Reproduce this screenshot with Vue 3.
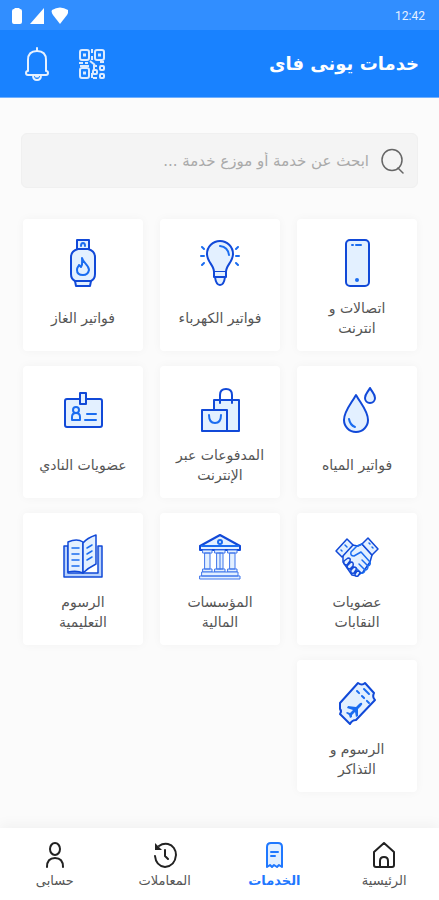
<script setup>
import { ref } from 'vue'

const search = ref('')

const services = [
  { icon: 'phone', label: 'اتصالات و انترنت' },
  { icon: 'bulb', label: 'فواتير الكهرباء' },
  { icon: 'gas', label: 'فواتير الغاز' },
  { icon: 'water', label: 'فواتير المياه' },
  { icon: 'bags', label: 'المدفوعات عبر الإنترنت' },
  { icon: 'club', label: 'عضويات النادي' },
  { icon: 'hands', label: 'عضويات النقابات' },
  { icon: 'bank', label: 'المؤسسات المالية' },
  { icon: 'book', label: 'الرسوم التعليمية' },
  { icon: 'ticket', label: 'الرسوم و التذاكر' }
]

const tabs = [
  { icon: 'home', label: 'الرئيسية' },
  { icon: 'receipt', label: 'الخدمات' },
  { icon: 'history', label: 'المعاملات' },
  { icon: 'user', label: 'حسابى' }
]
const active = ref('receipt')
</script>

<template>
  <div class="page" dir="rtl" lang="ar">
    <div class="status">
      <span class="time">12:42</span>
      <svg class="statusIcons" width="56" height="18" viewBox="0 0 56 18" fill="#fff" aria-hidden="true">
        <path d="M3 1h4l1 1q2 0 2 2v11q0 2-2 2H2q-2 0-2-2V4q0-2 2-2z" />
        <path d="M32 1v16H18z" />
        <path d="M40 3q8-5 16 0 1 2-1 5l-7 9-7-9q-2-3-1-5z" />
      </svg>
    </div>

    <header class="header">
      <h1 class="title">خدمات يونى فاى</h1>
      <div class="actions">
        <button type="button" class="iconButton" aria-label="رمز الاستجابة">
          <svg width="28" height="32" viewBox="0 0 28 32" fill="none" stroke="#dcebff" stroke-width="2">
            <rect x="2" y="2" width="9" height="10" rx="2" />
            <rect x="17" y="2" width="9" height="10" rx="2" />
            <rect x="2" y="20" width="9" height="10" rx="2" />
            <path d="M5 7h3M20 7h3M5 25h3" stroke-width="3" />
            <path d="M14 1v4M14 8v4M1 15h4M7 15h3M12 13l5 4M2 18h9M22 14h4M19 18h-3v4M14 25v5" />
            <rect x="22" y="18" width="4" height="4" rx="1" />
            <rect x="15" y="22" width="4" height="4" rx="1" />
            <rect x="22" y="26" width="4" height="4" rx="1" />
            <path d="M15 30h4" />
          </svg>
        </button>
        <button type="button" class="iconButton" aria-label="الإشعارات">
          <svg width="26" height="34" viewBox="0 0 26 34" fill="none" stroke="#e6f1ff" stroke-width="2" stroke-linecap="round" stroke-linejoin="round">
            <path d="M13 1v3M4 24V13q0-9 9-9t9 9v11M4 24q-2 0-2 2t2 2h18q2 0 2-2t-2-2" />
            <path d="M9 28q0 5 4 5t4-5M12 29.500h2" />
          </svg>
        </button>
      </div>
    </header>

    <main class="content">
      <label class="search">
        <svg width="24" height="26" viewBox="0 0 24 26" fill="none" stroke="#666" stroke-width="1.500" stroke-linecap="round" aria-hidden="true">
          <ellipse cx="11" cy="12" rx="10" ry="10.500" />
          <path d="M17 20l5 5" />
        </svg>
        <input v-model="search" type="text" class="searchInput" aria-label="بحث" placeholder="ابحث عن خدمة أو موزع خدمة ...">
      </label>

      <div class="grid">
        <button v-for="service in services" :key="service.icon" type="button" class="card">
          <svg class="cardIcon" viewBox="0 0 48 48" aria-hidden="true">
            <g v-if="service.icon == 'phone'">
              <rect x="13" y="1" width="23" height="46" rx="4" />
              <path class="line" d="M19 6h1M23 6h5" />
              <circle class="solid" cx="24" cy="41" r="2" />
            </g>
            <g v-else-if="service.icon == 'bulb'">
              <path d="M18 33c0-7-7-10-7-18a13 13 0 0 1 26 0c0 8-7 11-7 18z" />
              <path d="M18 33v5h12v-5M19 38q1 8 5 8t5-8z" />
              <path class="line" d="M24 7q8 1 9 9M5 17h3M40 17h3M6 8l2 2M42 8l-2 2M6 26l2-2M42 26l-2-2" />
            </g>
            <g v-else-if="service.icon == 'gas'">
              <path d="M18 10V1h12v9" />
              <path class="line" d="M22 7q0-3 2-3t2 3" />
              <path d="M19 10h10q7 2 7 8v17q0 5-4 7H16q-4-2-4-7V18q0-6 7-8z" />
              <path d="M16 42h16l-1 5H17z" />
              <path class="line" d="M23 19c1 5 7 7 7 12q-1 5-6 5-6 0-6-5c0-3 2-4 2-5l2 2c2-3 1-6 1-9z" />
            </g>
            <g v-else-if="service.icon == 'water'">
              <path d="M23 9c5 9 12 16 12 25a12 12 0 0 1-24 0c0-9 7-16 12-25z" />
              <path d="M37 2c2 4 5 6 5 10a5 5 0 0 1-10 0c0-4 3-6 5-10z" />
              <path class="line" d="M16 33q1 6 6 8" />
            </g>
            <g v-else-if="service.icon == 'bags'">
              <path d="M18 14h25v31H18z" />
              <path class="bare" d="M24 17V9q0-6 6-6t6 6v8" />
              <path d="M6 24h25v21H6z" />
              <path class="line" d="M13 29q0 8 6 8t6-8" />
            </g>
            <g v-else-if="service.icon == 'club'">
              <rect x="6" y="13" width="37" height="28" rx="2" />
              <path d="M21 7h6v11h-6z" />
              <circle class="line" cx="17" cy="24" r="3" />
              <path class="line" d="M13 34v-3q0-4 4-4t4 4v3zM28 28h9M26 34h11" />
            </g>
            <g v-else-if="service.icon == 'hands'" class="medium">
              <path d="M10 22l9-10 6 1 4-2 10 11-2 7-7 10-6 4-5-1-9-13z" />
              <path d="M3 18L14 6l6 6L9 24z" />
              <path d="M35 5l10 11-6 6-10-11z" />
              <path class="line" d="M29 11l-5 2-6 6q-1 4 3 4l7-4 9 10q1 3-2 4l-6-6M35 33q0 4-3 4l-6-6M32 37q-1 4-4 3l-5-5" />
              <path d="M11 28l4-3q3 0 2 3l-3 4q-4 0-3-4zM14 33l4-4q3 0 2 4l-3 3q-3 0-3-3zM18 37l3-3q3 0 2 3l-2 3q-4 1-3-3zM22 41l2-3q3 0 3 2l-2 3q-3 1-3-2z" />
              <path class="line" d="M8 17l1 1M12 12l2 2M36 10l1 1M39 14l1 1" />
            </g>
            <g v-else-if="service.icon == 'bank'">
              <path d="M24 2l20 11v4H4v-4z" />
              <circle class="line" cx="24" cy="9" r="2" />
              <path class="line" d="M6 13h36" />
              <path class="fine" d="M7 17h9v3H7zM19 17h10v3H19zM32 17h9v3h-9zM9 20h5v16H9zM21 20h6v16h-6zM34 20h5v16h-5zM7 36h9v3H7zM19 36h10v3H19zM32 36h9v3h-9z" />
              <path class="fine" d="M24 20v16M6 39h36v4H6zM4 43h40v3H4z" />
            </g>
            <g v-else-if="service.icon == 'book'" class="medium">
              <path class="back" d="M5 13h4v27h30V13h4v31H5z" />
              <path d="M9 9q9-4 15 0v31q-6-3-15-1z" />
              <path d="M24 10q4-5 13-8v29q-8 4-13 9z" />
              <path class="line" d="M13 15h7M13 21h7M13 27h7M13 33h7M28 15l5-3M28 21l5-3M28 27l5-3" />
            </g>
            <g v-else>
              <path d="M7 23L25 3q4 3 7 0l9 10q-2 4 1 7L23 40q-4 0-6 4L7 34q2-3 0-5z" />
              <path class="line" stroke-dasharray="3 4" d="M24 11l12 12" />
              <path class="line" d="M31 9l5 5" />
              <path class="solid" d="M29 23q-1-1-3 1l-3 3-8-1-1 2 6 2-3 3-3-1-1 1 3 2 1 3 2-1v-2l3-3 1 5 2-1v-7l3-3q2-2 1-3z" />
            </g>
          </svg>
          <span class="cardLabel"><span class="cardText">{{ service.label }}</span></span>
        </button>
      </div>
    </main>

    <nav class="tabs">
      <a
        v-for="tab in tabs"
        :key="tab.icon"
        href="#"
        class="tab"
        :class="{ active: tab.icon == active }"
        @click.prevent="active = tab.icon"
      >
        <svg class="tabIcon" viewBox="0 0 26 26" aria-hidden="true">
          <path v-if="tab.icon == 'home'" d="M3 10L13 1l10 9v13q0 2-2 2H5q-2 0-2-2zM9 25v-6q0-4 4-4t4 4v6" />
          <g v-else-if="tab.icon == 'receipt'">
            <path class="tint" d="M6 25V5q0-4 4-4h7q4 0 4 4v20l-3-2-2 2-3-2-2 2-2-2z" />
            <path d="M10 10h7M10 14h4" />
          </g>
          <g v-else-if="tab.icon == 'history'">
            <path d="M7 4q4-3 9-2c5 1 8 6 8 11q-1 11-11 12-9-1-10-11M13 8v6l3 3" />
            <path class="arrow" d="M3 1v7h7z" />
          </g>
          <g v-else>
            <ellipse cx="13" cy="7" rx="5" ry="6" />
            <path d="M5 25q0-9 8-9t8 9" />
          </g>
        </svg>
        <span>{{ tab.label }}</span>
      </a>
    </nav>
  </div>
</template>

<style>
body {
    margin: 0;
    background: #fbfbfb;
}
</style>

<style scoped>
.page {
    display: flex;
    flex-direction: column;
    min-height: 100vh;
    background: #fbfbfb;
    font-family: "DejaVu Sans", sans-serif;
    color: #555;
}

.page * {
    box-sizing: border-box;
}

button {
    border: 0;
    padding: 0;
    font: inherit;
    color: inherit;
    cursor: pointer;
}

.status {
    display: flex;
    align-items: center;
    justify-content: space-between;
    height: 30px;
    padding: 2px 14px 0 12px;
    background: #318eff;
}

.time {
    font-family: Roboto, sans-serif;
    font-size: 12px;
    color: #e6f1ff;
}

.header {
    display: flex;
    align-items: center;
    justify-content: space-between;
    height: 68px;
    padding: 0 20px 0 24px;
    background: #1982ff;
    border-bottom: 1px solid #70b0ff;
}

.title {
    margin: 0;
    font-size: 18px;
    line-height: 32px;
    font-weight: bold;
    color: #fff;
}

.actions {
    display: flex;
    align-items: center;
    gap: 28px;
}

.iconButton {
    display: flex;
    background: none;
}

.content {
    flex: 1;
    padding: 35px 21px;
}

.search {
    display: flex;
    align-items: center;
    gap: 12px;
    height: 55px;
    padding: 0 12px;
    border: 1px solid #f0f0f0;
    border-radius: 6px;
    background: #f4f4f4;
}

.searchInput {
    flex: 1;
    min-width: 0;
    height: 32px;
    padding: 0;
    border: 0;
    outline: 0;
    background: none;
    font-family: inherit;
    font-size: 15px;
    color: #555;
}

.searchInput::placeholder {
    color: #aaa;
    opacity: 1;
}

.grid {
    display: grid;
    grid-template-columns: repeat(3, 1fr);
    gap: 15px 17px;
    margin: 31px 1px 0 2px;
}

.card {
    display: flex;
    flex-direction: column;
    align-items: center;
    gap: 11px;
    height: 132px;
    padding: 20px 8px 0;
    border-radius: 4px;
    background: #fff;
    box-shadow: 0 0 10px rgba(0, 0, 0, 0.04);
}

.cardIcon {
    flex: none;
    width: 48px;
    height: 48px;
    fill: #e3f0ff;
    stroke: #1149d8;
    stroke-width: 2;
    stroke-linejoin: round;
    stroke-linecap: round;
}

.cardIcon .line {
    fill: none;
    stroke: #1a6cf0;
}

.cardIcon .bare {
    fill: none;
}

.cardIcon .medium {
    stroke-width: 1.5;
}

.cardIcon .back {
    fill: #b9d2fb;
}

.cardIcon .fine {
    stroke: #3f76ec;
    stroke-width: 1;
}

.cardIcon .solid {
    fill: #1a6cf0;
    stroke: none;
}

.cardLabel {
    display: flex;
    align-items: center;
    height: 40px;
}

.cardText {
    max-width: 92px;
    font-size: 14px;
    line-height: 20px;
    text-align: center;
}

.tabs {
    display: flex;
    height: 72px;
    background: #fff;
    box-shadow: 0 -4px 12px rgba(0, 0, 0, 0.04);
}

.tab {
    flex: 1;
    display: flex;
    flex-direction: column;
    align-items: center;
    gap: 3px;
    padding-top: 14px;
    font-size: 13px;
    line-height: 20px;
    color: #555;
    text-decoration: none;
}

.tabIcon {
    width: 26px;
    height: 26px;
    fill: none;
    stroke: #222;
    stroke-width: 2;
    stroke-linecap: round;
    stroke-linejoin: round;
}

.tabIcon .arrow {
    fill: #222;
    stroke: none;
}

.tab.active {
    color: #1f78ff;
    font-weight: bold;
}

.tab.active .tabIcon {
    stroke: #1f78ff;
}

.tab.active .tint {
    fill: #e3f0ff;
}
</style>
